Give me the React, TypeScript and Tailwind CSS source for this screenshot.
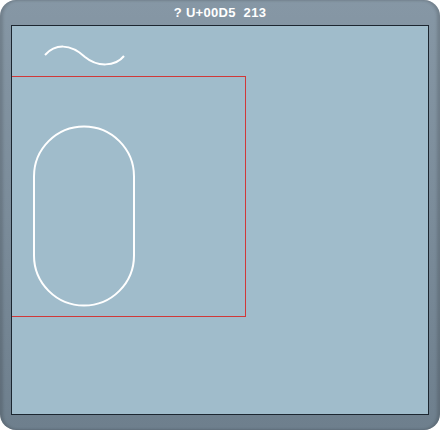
export default function App() {
  return (
    <div className="w-[440px] h-[430px] bg-white">
      <div className="w-[440px] h-[430px] rounded-[16px] bg-gradient-to-b from-[#8697a5] via-[#7b8c9a] to-[#6e7f8d] flex flex-col px-[11px] pb-[15px] shadow-[inset_3px_0_3px_rgba(0,0,0,0.15),inset_-3px_0_3px_rgba(0,0,0,0.15)]">
        <div className="h-[25px] flex items-center justify-center text-white font-bold text-[13px] tracking-[0.3px] whitespace-pre pt-[1px]" style={{ fontFamily: '"Liberation Sans", Arial, sans-serif' }}>
          {"? U+00D5  213"}
        </div>
        <div className="relative flex-1 bg-[#a0bccb] border border-[#1c2630] overflow-hidden">
          <svg className="absolute inset-0" width="415" height="388" viewBox="12 26 415 388">
            <rect x="12" y="76" width="234" height="1" fill="#d03838" />
            <rect x="12" y="316" width="234" height="1" fill="#d03838" />
            <rect x="245" y="76" width="1" height="241" fill="#d03838" />
            <rect x="34" y="126.5" width="100" height="179" rx="50" ry="50" fill="none" stroke="#ffffff" strokeWidth="2" />
            <path d="M45 55 C 55 44, 70 43, 85 57 C 97 67, 115 67, 124 56" fill="none" stroke="#ffffff" strokeWidth="2" />
          </svg>
        </div>
      </div>
    </div>
  );
}
